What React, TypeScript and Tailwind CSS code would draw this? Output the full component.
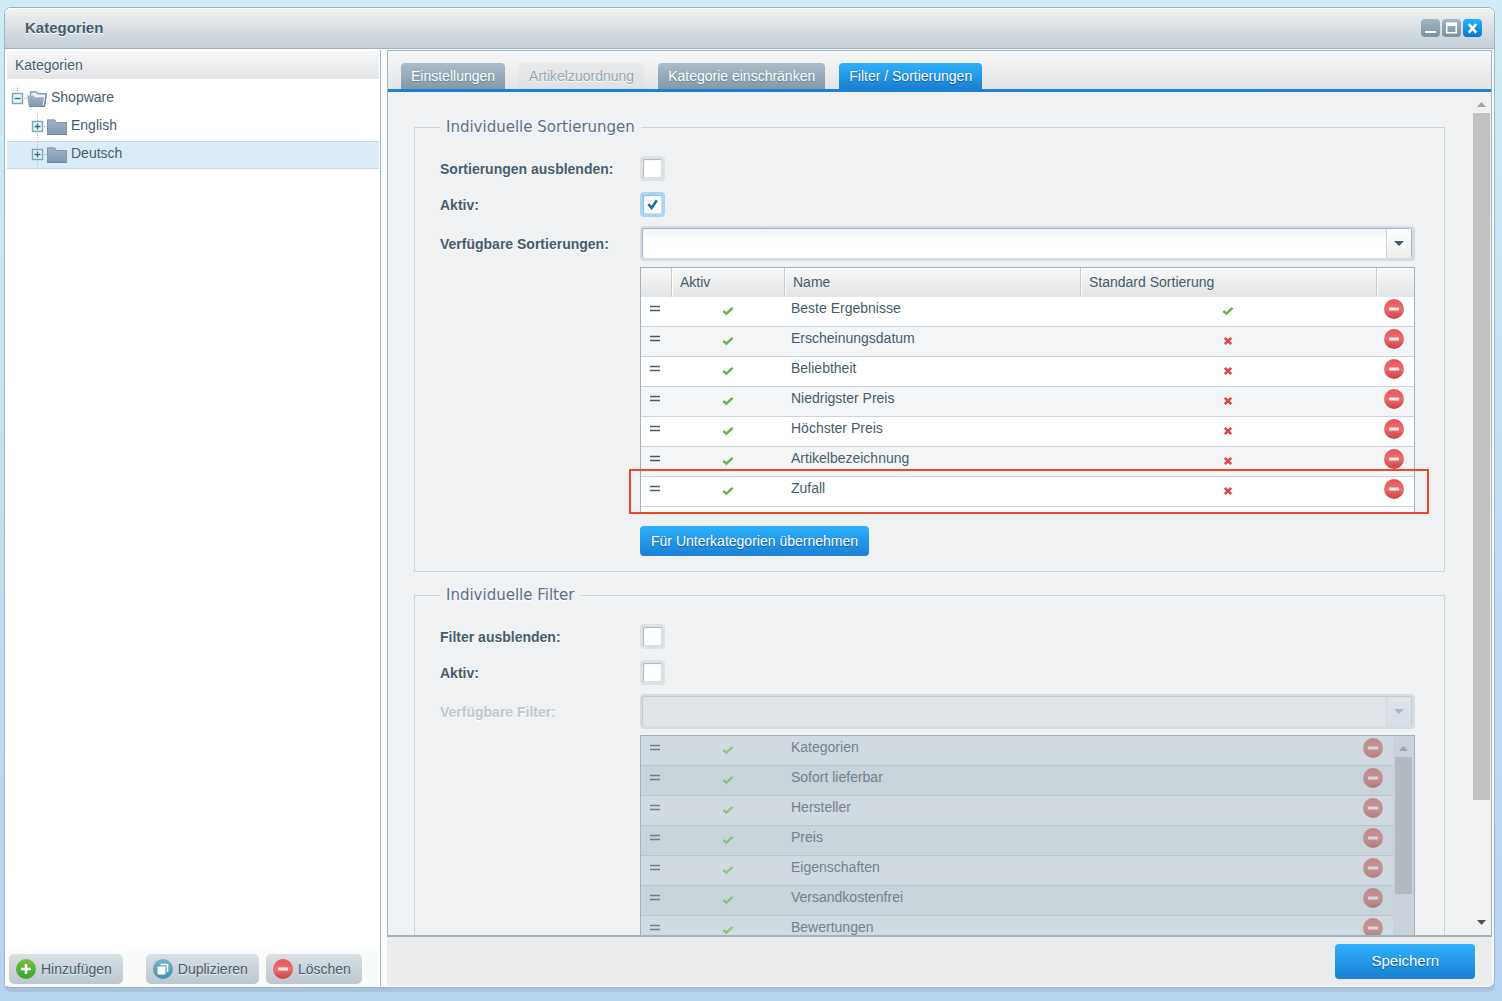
import type { ReactNode } from "react";
import clsx from "clsx";

type SortingRow = {
  name: string;
  isDefault: boolean;
};

const sortings: SortingRow[] = [
  { name: "Beste Ergebnisse", isDefault: true },
  { name: "Erscheinungsdatum", isDefault: false },
  { name: "Beliebtheit", isDefault: false },
  { name: "Niedrigster Preis", isDefault: false },
  { name: "Höchster Preis", isDefault: false },
  { name: "Artikelbezeichnung", isDefault: false },
  { name: "Zufall", isDefault: false },
];

const filters = ["Kategorien", "Sofort lieferbar", "Hersteller", "Preis", "Eigenschaften", "Versandkostenfrei", "Bewertungen"];

/* icons */

function CheckIcon() {
  return (
    <svg width="12" height="10" viewBox="0 0 12 10" className="inline-block">
      <path d="M1.3 5 4.4 7.6 10.6 1.8" fill="none" stroke="#62b546" strokeWidth="2.4" />
    </svg>
  );
}

function CrossIcon() {
  return (
    <svg width="10" height="10" viewBox="0 0 10 10" className="inline-block">
      <path d="M1.8 1.8 8.2 8.2M8.2 1.8 1.8 8.2" stroke="#dc4747" strokeWidth="2.6" />
    </svg>
  );
}

function DragIcon() {
  return (
    <svg width="12" height="8" viewBox="0 0 12 8" className="inline-block">
      <path d="M1 1.5H11M1 5.5H11" stroke="#475c6a" strokeWidth="1.4" />
    </svg>
  );
}

function MinusIcon() {
  return (
    <svg width="20" height="20" viewBox="0 0 20 20">
      <defs>
        <linearGradient id="minus-red" x1="0" y1="0" x2="0" y2="1">
          <stop offset="0" stopColor="#e65555" />
          <stop offset="0.5" stopColor="#ea6e70" />
          <stop offset="1" stopColor="#d03e40" />
        </linearGradient>
      </defs>
      <circle cx="10" cy="10" r="10" fill="url(#minus-red)" />
      <rect x="5" y="8.6" width="10" height="2.8" rx="0.6" fill="#fbe9e9" />
    </svg>
  );
}

function PlusIcon() {
  return (
    <svg width="20" height="20" viewBox="0 0 20 20">
      <defs>
        <linearGradient id="plus-green" x1="0" y1="0" x2="0" y2="1">
          <stop offset="0" stopColor="#79bf3c" />
          <stop offset="1" stopColor="#37a32c" />
        </linearGradient>
      </defs>
      <circle cx="10" cy="10" r="10" fill="url(#plus-green)" />
      <path d="M10 5V15M5 10H15" stroke="#fff" strokeWidth="2.6" />
    </svg>
  );
}

function DuplicateIcon() {
  return (
    <svg width="20" height="20" viewBox="0 0 20 20">
      <defs>
        <linearGradient id="dup-teal" x1="0" y1="0" x2="0" y2="1">
          <stop offset="0" stopColor="#74b6cb" />
          <stop offset="1" stopColor="#3f90a9" />
        </linearGradient>
      </defs>
      <circle cx="10" cy="10" r="10" fill="url(#dup-teal)" />
      <path d="M7.5 5.5H14.5V13" fill="none" stroke="#fff" strokeWidth="1.6" />
      <rect x="4.5" y="7.5" width="8" height="8" rx="0.8" fill="#fff" />
    </svg>
  );
}

function ExpanderIcon({ open }: { open: boolean }) {
  return (
    <svg width="16" height="28" viewBox="0 0 16 28" className="shrink-0">
      <path d="M6.5 1V8M13 13.5H16" stroke="#b4b9bd" strokeDasharray="1 1" />
      {!open && <path d="M6.5 20V26" stroke="#b4b9bd" strokeDasharray="1 1" />}
      <rect x="1.5" y="8.5" width="10" height="10" fill="#e4f2f6" stroke="#7ba7b6" strokeWidth="1.4" />
      <path d={open ? "M3.5 13.5H9.5" : "M3.5 13.5H9.5M6.5 10.5V16.5"} stroke="#32748a" strokeWidth="1.4" />
    </svg>
  );
}

function FolderIcon({ open }: { open: boolean }) {
  return (
    <svg width="20" height="16" viewBox="0 0 20 16" className="shrink-0">
      <defs>
        <linearGradient id="folder-blue" x1="0" y1="0" x2="0" y2="1">
          <stop offset="0" stopColor="#a3b4c7" />
          <stop offset="1" stopColor="#8197b3" />
        </linearGradient>
      </defs>
      {open ? (
        <>
          <path d="M3.5 5V1H9.5L11 2.8H19.3L17.5 15H15Z" fill="#eef3f8" stroke="#8499b0" strokeWidth="1.4" />
          <path d="M0 4.5H6.5L8 6.2H17L15.5 15.5H2Z" fill="url(#folder-blue)" />
          <path d="M2 15.5H17.5L19.5 3" fill="none" stroke="#7188a3" strokeWidth="1" />
        </>
      ) : (
        <>
          <path d="M0 0.5H8L9.5 3H20V15.5H0Z" fill="url(#folder-blue)" />
          <path d="M0.5 15.5V1H7.5L9.2 3.5H19.5V15.5" fill="none" stroke="#8195ac" strokeWidth="1" />
          <path d="M0 15.5H20" stroke="#6f86a3" />
        </>
      )}
    </svg>
  );
}

/* form parts */

function Checkbox({ id, checked = false }: { id: string; checked?: boolean }) {
  return (
    <div className="relative h-[25px] w-[25px]">
      <input
        id={id}
        type="checkbox"
        defaultChecked={checked}
        className="peer block h-[25px] w-[25px] appearance-none rounded-[4px] border-[3px] border-[#dde1e4] bg-white shadow-[inset_1px_1px_1px_#a9b4bc,inset_-1px_-1px_1px_#d8dde0] checked:border-[#a9d5f5] checked:shadow-[inset_1px_1px_1px_#8fb9d8,inset_-1px_-1px_1px_#c8dbe8]"
      />
      <svg viewBox="0 0 11 11" className="pointer-events-none absolute top-[7px] left-[7px] hidden h-[11px] w-[11px] peer-checked:block">
        <path d="M1.4 5 4.6 9 9.8 1.2" fill="none" stroke="#1d6fae" strokeWidth="2.6" />
      </svg>
    </div>
  );
}

function FieldRow({ id, label, muted = false, className, children }: { id: string; label: string; muted?: boolean; className?: string; children: ReactNode }) {
  return (
    <div className={clsx("flex items-center", className)}>
      <label
        htmlFor={id}
        className={clsx("w-[200px] shrink-0 text-[14px] leading-5 font-bold [text-shadow:0_1px_0_#fff]", muted ? "text-[#c0c7cc]" : "text-[#475c6a]")}
      >
        {label}
      </label>
      {children}
    </div>
  );
}

function Combo({ id, disabled = false }: { id: string; disabled?: boolean }) {
  return (
    <div className={clsx("relative min-w-0 flex-1 rounded-[4px] pt-[2px] pr-[3px] pb-[3px] pl-[2px]", disabled ? "bg-[#d7dce1]" : "bg-[#d5dbe2]")}>
      <select
        id={id}
        disabled={disabled}
        className={clsx(
          "block h-[30px] w-full appearance-none rounded-[3px] border-t border-r border-l text-[14px]",
          disabled
            ? "border-[#c3cbd2] bg-[#e1e5e9]"
            : "border-[#a3b3bf] bg-linear-to-b from-[#f1f4f4] to-white to-40%"
        )}
      >
        <option value=""></option>
      </select>
      <span
        className={clsx(
          "pointer-events-none absolute top-[3px] right-1 flex h-[29px] w-[25px] items-center justify-center border-l",
          disabled ? "border-[#d0d7dd] bg-linear-to-b from-[#e1e5e9] to-[#d5dfe7]" : "border-[#ccd3d8] bg-linear-to-b from-white to-[#eceded]"
        )}
      >
        <svg width="10" height="5" viewBox="0 0 10 5">
          <path d="M0 0H10L5 5Z" fill={disabled ? "#9db9ce" : "#475c6a"} />
        </svg>
      </span>
    </div>
  );
}

function Group({ title, children }: { title: string; children: ReactNode }) {
  return (
    <fieldset className="min-w-0 border border-[#cdd2d5] pr-[29px] pb-[15px] pl-[25px]">
      <legend className="px-[6px] font-['Verdana','DejaVu_Sans',sans-serif] text-[15px] leading-[18px] text-[#5f6e89] [text-shadow:0_1px_0_#fff]">
        {title}
      </legend>
      <div className="pt-5">{children}</div>
    </fieldset>
  );
}

function Scrollbar({ thumb, className, children }: { thumb: string; className?: string; children: ReactNode }) {
  return (
    <div className={clsx("flex w-[17px] shrink-0 flex-col", className)}>
      <svg viewBox="0 0 17 17" className="h-[17px] shrink-0">
        <path d="M4 11H13L8.5 6Z" fill="#a3a3a3" />
      </svg>
      <div className={thumb}></div>
      {children}
    </div>
  );
}

function RemoveButton({ name, disabled = false }: { name: string; disabled?: boolean }) {
  return (
    <button type="button" disabled={disabled} aria-label={`${name} entfernen`} className="mt-[2px] ml-2 block h-5 w-5">
      <MinusIcon />
    </button>
  );
}

function SortingTable() {
  const head = "border-l border-[#c3cbd1] bg-linear-to-b from-[#f8f8f8] to-[#e3e4e6] pb-[2px] pl-2 text-left font-normal shadow-[inset_1px_1px_0_#fff]";

  return (
    <div className="relative mt-[6px] ml-[200px]">
      <div className="border-x border-t border-[#a0b2bf] bg-white pb-[5px]">
        <table className="w-full table-fixed border-separate border-spacing-0 text-[14px] leading-[22px] text-[#475c6a]">
          <colgroup>
            <col className="w-[30px]" />
            <col className="w-[113px]" />
            <col />
            <col />
            <col className="w-[38px]" />
          </colgroup>
          <thead>
            <tr className="h-[29px]">
              <th className="bg-linear-to-b from-[#f8f8f8] to-[#e3e4e6]"></th>
              <th className={head}>Aktiv</th>
              <th className={head}>Name</th>
              <th className={head}>Standard Sortierung</th>
              <th className={head}></th>
            </tr>
          </thead>
          <tbody>
            {sortings.map((row) => (
              <tr key={row.name} className="h-[30px] align-top even:bg-[#f3f5f7] [&>td]:border-b [&>td]:border-[#c8d3dc]">
                <td className="pl-2">
                  <DragIcon />
                </td>
                <td className="pt-[2px] text-center">
                  <CheckIcon />
                </td>
                <td className="pl-[7px]">{row.name}</td>
                <td className="pt-[2px] text-center">{row.isDefault ? <CheckIcon /> : <CrossIcon />}</td>
                <td>
                  <RemoveButton name={row.name} />
                </td>
              </tr>
            ))}
          </tbody>
        </table>
      </div>
      {/* marker around the newly added sorting */}
      <div className="pointer-events-none absolute -right-[14px] -bottom-[2px] -left-[11px] h-[45px] border-2 border-[#ee4a2a]"></div>
    </div>
  );
}

function FilterTable() {
  return (
    <div className="mt-[6px] ml-[200px] flex border border-[#a0b2bf] bg-[#c9d2da]">
      <table className="min-w-0 flex-1 table-fixed border-separate border-spacing-0 text-[14px] leading-[22px] text-[#71818e]">
        <colgroup>
          <col className="w-[30px]" />
          <col className="w-[113px]" />
          <col />
          <col className="w-[38px]" />
        </colgroup>
        <tbody>
          {filters.map((name) => (
            <tr key={name} className="h-[30px] bg-[#d1d9e1] align-top even:bg-[#c9d4da] [&>td]:border-b [&>td]:border-[#b6c4cf]">
              <td className="pl-2">
                <span className="opacity-70">
                  <DragIcon />
                </span>
              </td>
              <td className="pt-[2px] text-center">
                <span className="opacity-60">
                  <CheckIcon />
                </span>
              </td>
              <td className="pl-[7px]">{name}</td>
              <td>
                <div className="opacity-60 brightness-90 saturate-75">
                  <RemoveButton name={name} disabled />
                </div>
              </td>
            </tr>
          ))}
        </tbody>
      </table>
      <Scrollbar className="mx-[2px] mt-1" thumb="h-[137px] bg-[#b1b9c1]">
        <div className="flex-1"></div>
      </Scrollbar>
    </div>
  );
}

/* left side */

function TreeItem({ label, open = false, nested = false, selected = false }: { label: string; open?: boolean; nested?: boolean; selected?: boolean }) {
  return (
    <li
      className={clsx(
        "flex h-7 items-center pr-2",
        nested ? "pl-6" : "pl-1",
        selected && "bg-[#dbecf6] shadow-[inset_0_1px_0_#c5dae8,inset_0_-1px_0_#c5dae8]"
      )}
    >
      <ExpanderIcon open={open} />
      <FolderIcon open={open} />
      <span className="pb-1 pl-1 text-[14px] leading-5">{label}</span>
    </li>
  );
}

function Sidebar() {
  const button = "flex h-[30px] items-center gap-[5px] rounded-[5px] bg-linear-to-b from-[#dae0e5] to-[#bcc7d0] pr-[11px] pl-[7px] text-[14px] [text-shadow:0_1px_0_#e8edf1]";

  return (
    <aside className="flex w-[376px] shrink-0 flex-col border-r border-[#9fb3c0] bg-white pt-px pr-px pl-[2px]">
      <h2 className="bg-linear-to-b from-[#f8f8f8] to-[#e3e4e6] px-2 text-[14px] leading-7 [text-shadow:0_1px_0_#fff]">Kategorien</h2>
      <ul className="flex-1 pt-[6px]">
        <TreeItem label="Shopware" open />
        <TreeItem label="English" nested />
        <TreeItem label="Deutsch" nested selected />
      </ul>
      <div className="flex bg-[#f9fbfb] pt-[3px] pb-[2px] pl-[2px]">
        <button type="button" className={clsx(button, "mr-[23px]")}>
          <PlusIcon />
          Hinzufügen
        </button>
        <button type="button" className={clsx(button, "mr-[7px]")}>
          <DuplicateIcon />
          Duplizieren
        </button>
        <button type="button" className={button}>
          <MinusIcon />
          Löschen
        </button>
      </div>
    </aside>
  );
}

function TabBar() {
  const tab = "h-[26px] rounded-t-[4px] px-[10px] text-[14px]";
  const normal = "bg-linear-to-b from-[#aebdc8] to-[#8299a8] text-white [text-shadow:0_1px_1px_#6b8292]";

  return (
    <div role="tablist" className="flex h-[41px] items-end gap-[14px] border-b-[3px] border-[#1a80d3] bg-linear-to-b from-[#f7f7f7] to-[#e3e4e6] pl-[13px]">
      <button type="button" role="tab" className={clsx(tab, normal)}>Einstellungen</button>
      <button type="button" role="tab" disabled className={clsx(tab, "bg-linear-to-b from-[#e8e9ea] to-[#dfe1e3] text-[#96a4ae] [text-shadow:0_1px_0_#fff]")}>
        Artikelzuordnung
      </button>
      <button type="button" role="tab" className={clsx(tab, normal)}>Kategorie einschränken</button>
      <button type="button" role="tab" aria-selected className={clsx(tab, "bg-linear-to-b from-[#2eb1fa] to-[#1a80d3] text-white [text-shadow:0_1px_1px_#1458a8]")}>
        Filter / Sortierungen
      </button>
    </div>
  );
}

function TitleBar() {
  const control = "flex h-[18px] w-[19px] items-center justify-center rounded-[4px]";

  return (
    <header className="flex h-[41px] shrink-0 items-center gap-[2px] rounded-t-[6px] border-b border-[#9fb3c0] bg-linear-to-b from-[#f1f2f2] to-[#c3ced6] pr-3 pl-5 shadow-[inset_0_1px_0_#fff]">
      <h1 className="flex-1 text-[15px] font-bold [text-shadow:0_1px_0_#fff]">Kategorien</h1>
      <button type="button" aria-label="Minimieren" className={clsx(control, "bg-linear-to-b from-[#a6b6c1] to-[#7a909f]")}>
        <svg width="13" height="12" viewBox="0 0 13 12">
          <rect x="1" y="9" width="11" height="2" fill="#fff" />
        </svg>
      </button>
      <button type="button" aria-label="Maximieren" className={clsx(control, "bg-linear-to-b from-[#a6b6c1] to-[#7a909f]")}>
        <svg width="13" height="12" viewBox="0 0 13 12">
          <path d="M1 0.5H12V11.5H1ZM2.5 4V10H10.5V4Z" fill="#fff" fillRule="evenodd" />
        </svg>
      </button>
      <button type="button" aria-label="Schließen" className={clsx(control, "bg-linear-to-b from-[#24b4fb] to-[#0778d0]")}>
        <svg width="11" height="11" viewBox="0 0 11 11">
          <path d="M1.8 1 9.2 9.6M9.2 1 1.8 9.6" stroke="#fff" strokeWidth="2.6" />
        </svg>
      </button>
    </header>
  );
}

export default function App() {
  return (
    <div className="h-screen bg-linear-to-b from-[#cfedf5] to-[#b8d2f1] px-1 pt-[7px] pb-[13px] font-['Liberation_Sans',Arial,sans-serif] text-[#475c6a]">
      <div className="mr-[3px] flex h-full flex-col rounded-[7px] border border-[#9fb3c0] bg-[#f9fbfb] shadow-[0_4px_0_#a9c2de]">
        <TitleBar />

        <div className="flex min-h-0 flex-1 gap-[6px] pt-px pr-[2px] pb-px">
          <Sidebar />

          <main className="flex min-w-0 flex-1 flex-col">
            <div className="flex min-h-0 flex-1 flex-col border border-b-2 border-[#a3b3bf] bg-[#f0f1f3]">
              <TabBar />
              <div className="flex min-h-0 flex-1">
                <div className="min-w-0 flex-1 overflow-hidden pt-[26px] pr-7 pl-[26px]">
                  <Group title="Individuelle Sortierungen">
                    <FieldRow id="hide-sortings" label="Sortierungen ausblenden:">
                      <Checkbox id="hide-sortings" />
                    </FieldRow>
                    <FieldRow id="sortings-active" label="Aktiv:" className="mt-[11px]">
                      <Checkbox id="sortings-active" checked />
                    </FieldRow>
                    <FieldRow id="sortings" label="Verfügbare Sortierungen:" className="mt-[9px]">
                      <Combo id="sortings" />
                    </FieldRow>
                    <SortingTable />
                    <button
                      type="button"
                      className="mt-[14px] ml-[200px] block h-[30px] rounded-[4px] bg-linear-to-b from-[#2eb1fa] to-[#1a80d3] px-[11px] text-[14px] text-white [text-shadow:0_1px_1px_#1458a8]"
                    >
                      Für Unterkategorien übernehmen
                    </button>
                  </Group>

                  <div className="mt-[14px]">
                    <Group title="Individuelle Filter">
                      <FieldRow id="hide-filters" label="Filter ausblenden:">
                        <Checkbox id="hide-filters" />
                      </FieldRow>
                      <FieldRow id="filters-active" label="Aktiv:" className="mt-[11px]">
                        <Checkbox id="filters-active" />
                      </FieldRow>
                      <FieldRow id="filters" label="Verfügbare Filter:" muted className="mt-[9px]">
                        <Combo id="filters" disabled />
                      </FieldRow>
                      <FilterTable />
                    </Group>
                  </div>
                </div>

                <Scrollbar className="mr-px bg-[#f1f1f1] py-1" thumb="flex-6 bg-[#c1c1c1]">
                  <div className="flex-1"></div>
                  <svg viewBox="0 0 17 17" className="h-[17px] shrink-0">
                    <path d="M4 6H13L8.5 11Z" fill="#505050" />
                  </svg>
                </Scrollbar>
              </div>
            </div>

            <footer className="flex h-[49px] shrink-0 items-center justify-end bg-[#ebecee] pr-[17px]">
              <button
                type="button"
                className="h-[35px] rounded-[4px] bg-linear-to-b from-[#2eb1fa] to-[#1a80d3] px-9 text-[15px] text-white [text-shadow:0_1px_1px_#1458a8]"
              >
                Speichern
              </button>
            </footer>
          </main>
        </div>
      </div>
    </div>
  );
}
